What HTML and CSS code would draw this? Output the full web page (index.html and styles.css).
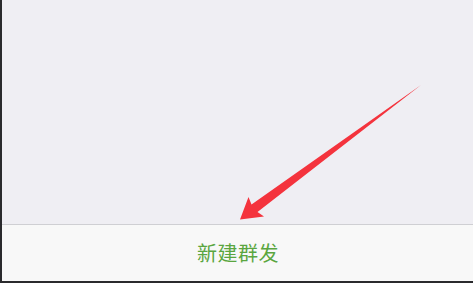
FILE: index.html
```html
<!DOCTYPE html>
<html lang="zh">
<head>
<meta charset="utf-8">
<link rel="stylesheet" href="styles.css">
</head>
<body>
<div class="frame">
  <main class="content"></main>
  <footer class="bar">
    <span class="action">新建群发</span>
  </footer>
  <svg class="arrow" width="473" height="283" viewBox="0 0 473 283">
    <polygon points="421,85 257.5,212 264,216.5 240,219.5 248.5,197 251.5,204.5" fill="#f4333d"/>
  </svg>
</div>
</body>
</html>
```
FILE: styles.css
```css
html, body {
  margin: 0;
  padding: 0;
  background: #2a2a2d;
}
.frame {
  position: relative;
  width: 471px;
  height: 281px;
  margin-left: 2px;
  display: flex;
  flex-direction: column;
  overflow: visible;
}
.content {
  flex: 0 0 224px;
  background: #efeef3;
}
.bar {
  flex: 1;
  background: #f8f8f8;
  border-top: 1px solid #cfcfd3;
  display: flex;
  align-items: center;
  justify-content: center;
}
.action {
  font-family: "Noto Sans CJK SC", "Noto Sans", sans-serif;
  font-size: 20px;
  letter-spacing: 0.5px;
  color: #5aa640;
  margin-left: 1px;
  margin-top: -1px;
}
.arrow {
  position: absolute;
  left: -2px;
  top: 0;
}
```
